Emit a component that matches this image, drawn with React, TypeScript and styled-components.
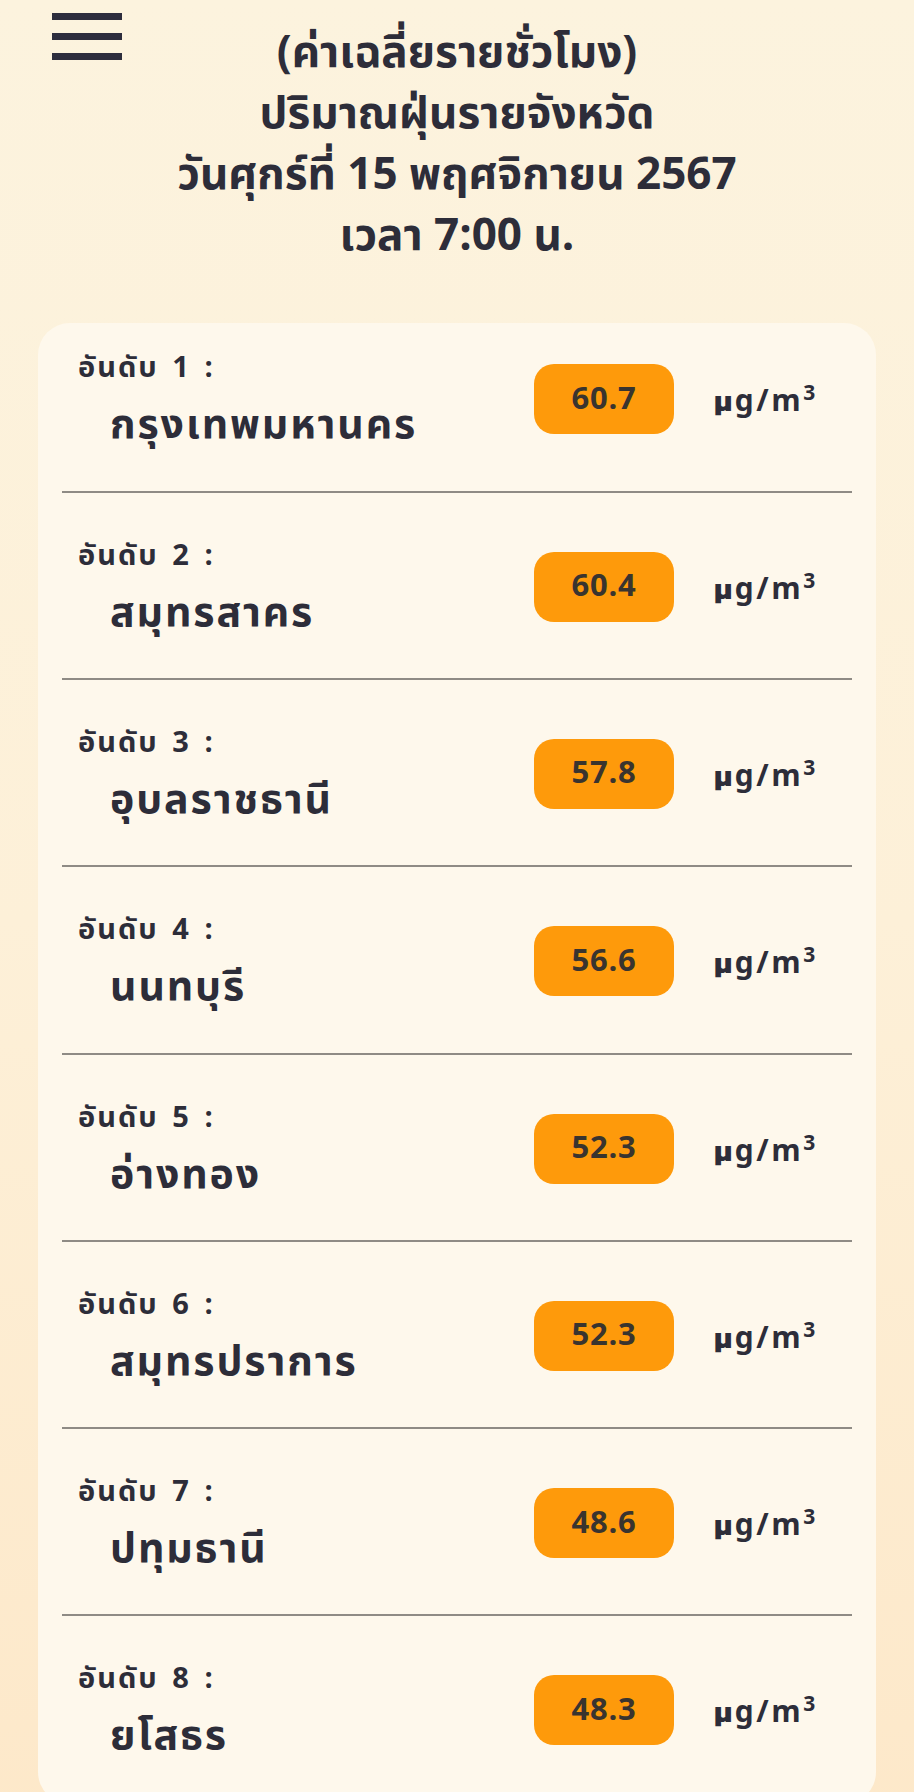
import React from "react";
import styled, { createGlobalStyle } from "styled-components";

const GlobalStyle = createGlobalStyle`
  html, body {
    margin: 0;
    padding: 0;
  }
  body {
    min-height: 1792px;
    background: linear-gradient(180deg, #fcf3de 0%, #fdf0d8 50%, #fde8c9 100%);
    font-family: "Noto Sans Thai", "Kanit", "Prompt", "Noto Sans", "DejaVu Sans", sans-serif;
    color: #2d2d39;
  }
`;

const Page = styled.div`
  display: flex;
  flex-direction: column;
  padding-bottom: 40px;
`;

const Header = styled.header`
  display: grid;
  grid-template-columns: 1fr auto 1fr;
  padding: 13px 0 0;
`;

const MenuButton = styled.button`
  justify-self: start;
  align-self: start;
  margin-left: 52px;
  width: 70px;
  height: 47px;
  padding: 0;
  border: none;
  background: none;
  display: flex;
  flex-direction: column;
  justify-content: space-between;
  cursor: pointer;
`;

const MenuBar = styled.span`
  display: block;
  height: 7px;
  width: 100%;
  background: #2d2d3d;
`;

const Title = styled.h1`
  margin: 10px 0 0;
  text-align: center;
  font-size: 44px;
  line-height: 61px;
  font-weight: 700;
  color: #2d2d39;
`;

const Card = styled.section`
  margin: 56px 38px 0;
  padding: 0 24px;
  background: #fef8ec;
  border-radius: 32px;
  display: flex;
  flex-direction: column;
`;

const Row = styled.div`
  box-sizing: border-box;
  height: 187.3px;
  padding: 41px 33px 0 16px;
  border-bottom: 2px solid #8f8b85;
  display: grid;
  grid-template-columns: 1fr 140px 105px;
  column-gap: 40px;
  align-items: start;

  &:first-child {
    height: 169.7px;
    padding-top: 23px;
  }
`;

const Names = styled.div`
  display: flex;
  flex-direction: column;
`;

const Rank = styled.div`
  font-size: 29px;
  line-height: 44px;
  font-weight: 700;
  letter-spacing: 2px;
  word-spacing: 4px;
`;

const Province = styled.div`
  padding-left: 32px;
  margin-top: 4px;
  font-size: 41px;
  line-height: 62px;
  font-weight: 700;
  letter-spacing: 1.9px;
`;

const Badge = styled.div`
  margin-top: 18px;
  height: 70px;
  border-radius: 20px;
  background: #fe9a0b;
  display: flex;
  align-items: center;
  justify-content: center;
  font-size: 31px;
  font-weight: 700;
  letter-spacing: 0.8px;
  color: #39342f;
`;

const Unit = styled.div`
  margin-top: 37px;
  font-size: 30px;
  line-height: 38px;
  font-weight: 700;
  letter-spacing: 2.5px;
  white-space: nowrap;
`;

const Sup = styled.sup`
  font-size: 21px;
  vertical-align: 11px;
  line-height: 0;
`;

const data: [string, string][] = [
  ["กรุงเทพมหานคร", "60.7"],
  ["สมุทรสาคร", "60.4"],
  ["อุบลราชธานี", "57.8"],
  ["นนทบุรี", "56.6"],
  ["อ่างทอง", "52.3"],
  ["สมุทรปราการ", "52.3"],
  ["ปทุมธานี", "48.6"],
  ["ยโสธร", "48.3"],
];

export default function App() {
  return (
    <Page>
      <GlobalStyle />
      <Header>
        <MenuButton aria-label="menu">
          <MenuBar />
          <MenuBar />
          <MenuBar />
        </MenuButton>
        <Title>
          (ค่าเฉลี่ยรายชั่วโมง)
          <br />
          ปริมาณฝุ่นรายจังหวัด
          <br />
          วันศุกร์ที่ 15 พฤศจิกายน 2567
          <br />
          เวลา 7:00 น.
        </Title>
        <div />
      </Header>
      <Card>
        {data.map(([name, value], i) => (
          <Row key={i}>
            <Names>
              <Rank>อันดับ {i + 1} :</Rank>
              <Province>{name}</Province>
            </Names>
            <Badge>{value}</Badge>
            <Unit>
              µg/m<Sup>3</Sup>
            </Unit>
          </Row>
        ))}
      </Card>
    </Page>
  );
}
